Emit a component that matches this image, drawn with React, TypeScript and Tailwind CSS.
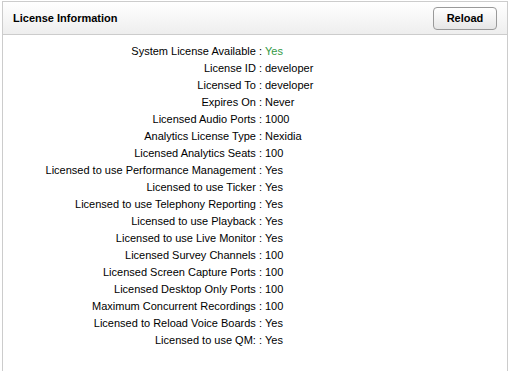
import React from "react";

const rows: { label: string; value: string; ok?: boolean }[] = [
  { label: "System License Available", value: "Yes", ok: true },
  { label: "License ID", value: "developer" },
  { label: "Licensed To", value: "developer" },
  { label: "Expires On", value: "Never" },
  { label: "Licensed Audio Ports", value: "1000" },
  { label: "Analytics License Type", value: "Nexidia" },
  { label: "Licensed Analytics Seats", value: "100" },
  { label: "Licensed to use Performance Management", value: "Yes" },
  { label: "Licensed to use Ticker", value: "Yes" },
  { label: "Licensed to use Telephony Reporting", value: "Yes" },
  { label: "Licensed to use Playback", value: "Yes" },
  { label: "Licensed to use Live Monitor", value: "Yes" },
  { label: "Licensed Survey Channels", value: "100" },
  { label: "Licensed Screen Capture Ports", value: "100" },
  { label: "Licensed Desktop Only Ports", value: "100" },
  { label: "Maximum Concurrent Recordings", value: "100" },
  { label: "Licensed to Reload Voice Boards", value: "Yes" },
  { label: "Licensed to use QM:", value: "Yes" },
];

export default function App() {
  return (
    <div
      className="w-[510px] h-[371px] bg-white pt-px pl-[2px] pr-[2px] overflow-hidden"
      style={{ fontFamily: '"Liberation Sans", Arial, sans-serif' }}
    >
      <div className="border border-b-0 border-[#cccccc] h-[380px]">
        {/* header */}
        <div className="flex items-center justify-between h-[33px] pl-[10px] pr-[10px] border-b border-[#cccccc] bg-gradient-to-b from-white to-[#eeeeee]">
          <h2 className="text-[11px] font-bold text-black">License Information</h2>
          <button className="w-[64px] h-[23px] rounded-[4px] border border-[#999999] bg-gradient-to-b from-white to-[#e6e6e6] text-[11px] font-bold text-black">
            Reload
          </button>
        </div>

        {/* details */}
        <div className="grid grid-cols-[259px_1fr] pt-[8px] text-[11px] text-black leading-[17px]">
          {rows.map((r, i) => (
            <React.Fragment key={i}>
              <div className="text-right whitespace-nowrap">{r.label} :</div>
              <div className={"pl-[3px] " + (r.ok ? "text-[#339944]" : "")}>{r.value}</div>
            </React.Fragment>
          ))}
        </div>
      </div>
    </div>
  );
}
